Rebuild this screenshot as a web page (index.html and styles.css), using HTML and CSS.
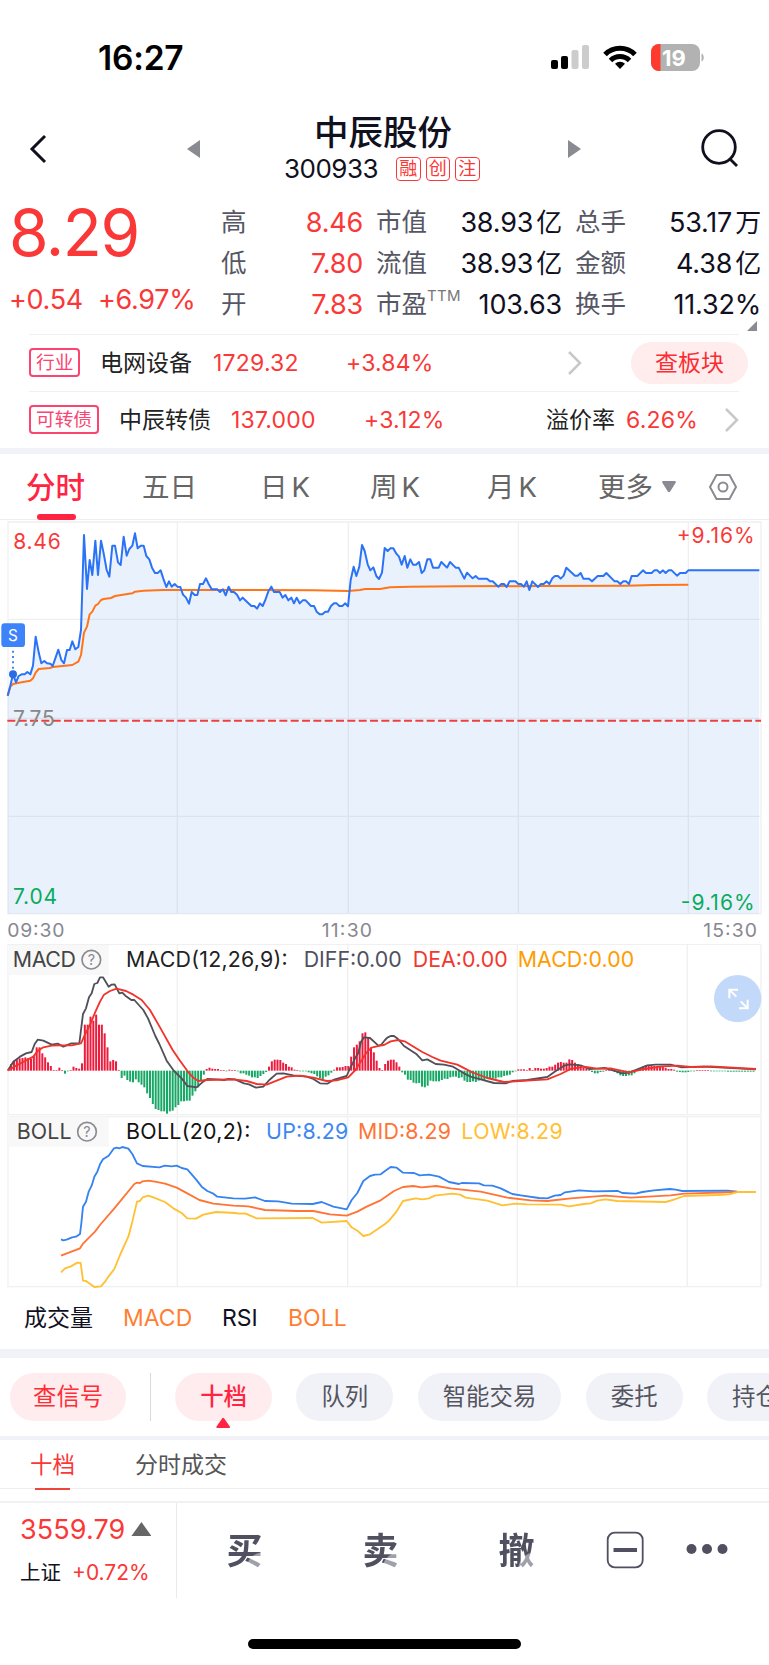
FILE: index.html
```html
<!DOCTYPE html>
<html lang="zh-CN">

<head>
    <meta charset="UTF-8">
    <meta name="viewport" content="width=device-width, initial-scale=1.0">
    <title>中辰股份 300933</title>
    <link rel="stylesheet" href="styles.css">
</head>

<body>
    <div class="statusbar">
        <span class="clock">16:27</span>
        <svg class="status-icons" width="156" height="30" viewBox="0 0 156 30">
            <rect x="1" y="17" width="7" height="9" rx="2" />
            <rect x="11" y="13" width="7" height="13" rx="2" />
            <rect x="21.500" y="7" width="7" height="19" rx="2" fill="#ccc" />
            <rect x="32" y="2" width="7" height="24" rx="2" fill="#ccc" />
            <g fill="none" stroke="#000" stroke-width="5">
                <path d="M55 11.500a21 21 0 0 1 30 0" />
                <path d="M60.500 17.500a13.500 13.500 0 0 1 19 0" />
            </g>
            <path d="M70 26l-5-5.300a7.300 7.300 0 0 1 10 0z" />
            <clipPath id="battery">
                <rect x="101" y="1" width="49" height="27" rx="8" />
            </clipPath>
            <g clip-path="url(#battery)">
                <rect x="101" y="1" width="49" height="27" fill="#b2b2b2" />
                <rect x="101" y="1" width="9.500" height="27" fill="#ff3b30" />
            </g>
            <path d="M151.500 10.500c3 1 3 7 0 8z" fill="#b2b2b2" />
            <text x="124" y="22.500" class="battery-level">19</text>
        </svg>
    </div>

    <header class="header">
        <svg class="back" width="20" height="30" viewBox="0 0 20 30">
            <path d="M17 2L4 15l13 13" />
        </svg>
        <i class="arrow arrow-left"></i>
        <div class="stock">
            <h1>中辰股份</h1>
            <div class="stock-code">
                <span>300933</span>
                <b>融</b><b>创</b><b>注</b>
            </div>
        </div>
        <i class="arrow arrow-right"></i>
        <svg class="search" width="42" height="42" viewBox="0 0 42 42">
            <circle cx="20" cy="19" r="16.300" />
            <path d="M31 31l7 7" />
        </svg>
    </header>

    <section class="quote">
        <div class="price">
            <strong>8.29</strong>
            <p><span>+0.54</span><span>+6.97%</span></p>
        </div>
        <dl class="stats">
            <dt>高</dt><dd class="up">8.46</dd>
            <dt>市值</dt><dd>38.93<i>亿</i></dd>
            <dt>总手</dt><dd>53.17<i>万</i></dd>
            <dt>低</dt><dd class="up">7.80</dd>
            <dt>流值</dt><dd>38.93<i>亿</i></dd>
            <dt>金额</dt><dd>4.38<i>亿</i></dd>
            <dt>开</dt><dd class="up">7.83</dd>
            <dt>市盈<sup>TTM</sup></dt><dd>103.63</dd>
            <dt>换手</dt><dd>11.32%</dd>
        </dl>
        <i class="corner"></i>
    </section>

    <section class="related">
        <div class="related-row industry">
            <span class="tag">行业</span>
            <span class="name">电网设备</span>
            <span class="up">1729.32</span>
            <span class="up">+3.84%</span>
            <svg class="chevron" width="16" height="26" viewBox="0 0 16 26">
                <path d="M2 2l11 11L2 24" />
            </svg>
            <button class="sector">查板块</button>
        </div>
        <div class="related-row bond">
            <span class="tag">可转债</span>
            <span class="name">中辰转债</span>
            <span class="up">137.000</span>
            <span class="up">+3.12%</span>
            <span class="name">溢价率</span>
            <span class="up">6.26%</span>
            <svg class="chevron" width="16" height="26" viewBox="0 0 16 26">
                <path d="M2 2l11 11L2 24" />
            </svg>
        </div>
    </section>

    <nav class="tabs">
        <a class="active">分时</a>
        <a>五日</a>
        <a class="kline">日K</a>
        <a class="kline">周K</a>
        <a class="kline">月K</a>
        <a>更多<i></i></a>
        <svg width="30" height="28" viewBox="0 0 30 28">
            <path d="M8.500 2h13L28 14l-6.500 12h-13L2 14z" />
            <circle cx="15" cy="14" r="4.500" />
        </svg>
    </nav>

    <!-- all charts are drawn at 3 units per pixel -->
    <svg class="chart" width="769" height="424" viewBox="0 0 2307 1272">
        <path class="grid" d="M24 6H2283V1181H24zM532 6V1181M1045 6V1181M1555 6V1181M2065 6V1181M24 298H2283M24 595H2283M24 889H2283" />
        <path class="area" id="price-area" />
        <polyline class="line average" id="average" />
        <polyline class="line price-line" id="price" />
        <path class="prev-close" d="M22 602H2283" />
        <path class="sell-pin" d="M39 392V455" />
        <circle cx="39" cy="463" r="12" fill="#2c6be0" />
        <rect x="4" y="310" width="71" height="71" rx="10" fill="#3d83fa" />
        <text class="sell" x="39" y="362">S</text>
        <g class="scale">
            <text x="40" y="87" textLength="142" fill="#fa3838">8.46</text>
            <text x="39" y="619" textLength="125" fill="#888">7.75</text>
            <text x="39" y="1153" textLength="132" fill="#09ab5c">7.04</text>
            <text x="2030" y="69" textLength="234" fill="#fa3838">+9.16%</text>
            <text x="2042" y="1170" textLength="222" fill="#09ab5c">-9.16%</text>
        </g>
        <g class="times">
            <text x="22" y="1251" textLength="171">09:30</text>
            <text x="965" y="1251" textLength="151">11:30</text>
            <text x="2110" y="1251" textLength="161">15:30</text>
        </g>
    </svg>

    <svg class="chart" width="769" height="172" viewBox="0 162 2307 516">
        <path class="grid" d="M24 163H2283V674H24zM532 163V674M1043 163V674M1552 163V674M2062 163V674" />
        <rect x="24" y="165" width="302" height="90" fill="#f8f8f8" />
        <g id="bars"></g>
        <polyline class="line diff" id="diff" />
        <polyline class="line dea" id="dea" />
        <g class="legend">
            <text x="38" y="232" textLength="190" fill="#444">MACD</text>
            <text x="378" y="232" textLength="485" fill="#222">MACD(12,26,9):</text>
            <text x="911" y="232" textLength="294" fill="#50505e">DIFF:0.00</text>
            <text x="1238" y="232" textLength="285" fill="#f2382e">DEA:0.00</text>
            <text x="1553" y="232" textLength="350" fill="#ff9c00">MACD:0.00</text>
        </g>
        <circle class="help" cx="274" cy="209" r="28" />
        <text class="help-mark" x="274" y="225">?</text>
        <circle cx="2213" cy="326" r="71" fill="#c3d9f9" />
        <path class="expand" d="M2188 325V299H2214M2190 301L2209 320M2217 355H2243V329M2241 353L2222 334" />
    </svg>

    <svg class="chart" width="769" height="172" viewBox="0 18 2307 516">
        <path class="grid" d="M24 20H2283V530H24zM532 20V530M1043 20V530M1552 20V530M2062 20V530" />
        <rect x="24" y="20" width="302" height="90" fill="#f8f8f8" />
        <polyline class="line upper" id="upper" />
        <polyline class="line middle" id="middle" />
        <polyline class="line lower" id="lower" />
        <g class="legend">
            <text x="50" y="87" textLength="165" fill="#444">BOLL</text>
            <text x="378" y="87" textLength="373" fill="#111">BOLL(20,2):</text>
            <text x="798" y="87" textLength="247" fill="#3c87f0">UP:8.29</text>
            <text x="1074" y="87" textLength="279" fill="#ff7434">MID:8.29</text>
            <text x="1384" y="87" textLength="304" fill="#ffc032">LOW:8.29</text>
        </g>
        <circle class="help" cx="261" cy="65" r="28" />
        <text class="help-mark" x="261" y="81">?</text>
    </svg>

    <div class="indicators">
        <a>成交量</a>
        <a class="on">MACD</a>
        <a>RSI</a>
        <a class="on">BOLL</a>
    </div>

    <div class="chips">
        <button class="chip signal">查信号</button>
        <i class="divider"></i>
        <button class="chip active">十档</button>
        <button class="chip">队列</button>
        <button class="chip">智能交易</button>
        <button class="chip">委托</button>
        <button class="chip">持仓</button>
    </div>

    <div class="subtabs">
        <a class="active">十档</a>
        <a>分时成交</a>
    </div>

    <footer class="trade">
        <div class="index">
            <p class="index-value">3559.79<i></i></p>
            <p class="index-change">上证<span>+0.72%</span></p>
        </div>
        <button class="deal">买</button>
        <button class="deal">卖</button>
        <button class="deal">撤</button>
        <svg class="more" width="123" height="40" viewBox="0 0 123 40">
            <rect x="1.700" y="2.700" width="35" height="34.600" rx="7" fill="none" stroke="#505060" stroke-width="1.800" />
            <path d="M7.500 20h23.500" stroke="#505060" stroke-width="4" />
            <g fill="#505060">
                <circle cx="85.500" cy="19" r="5" />
                <circle cx="101" cy="19" r="5" />
                <circle cx="116.500" cy="19" r="5" />
            </g>
        </svg>
    </footer>
    <div class="home-indicator"></div>

    <script src="charts.js"></script>
</body>

</html>
```
FILE: styles.css
```css
* {
    box-sizing: border-box;
}

body {
    margin: 0;
    width: 769px;
    height: 1665px;
    overflow: hidden;
    background: #fff;
    color: #10101e;
    font-family: Inter, "Noto Sans CJK SC", sans-serif;
    font-size: 23px;
    line-height: 1;
    white-space: nowrap;
}

h1,
p,
dl,
dd {
    margin: 0;
}

i {
    font-style: normal;
}

svg {
    display: block;
}

button {
    border: 0;
    padding: 0;
    font: inherit;
    line-height: 1;
}

.up {
    color: #fa3838;
}

/* status bar */

.statusbar {
    display: flex;
    justify-content: space-between;
    align-items: center;
    height: 116px;
    padding: 0 64px 0 98px;
}

.clock {
    color: #000;
    font-size: 33.500px;
    font-weight: 600;
    line-height: 40px;
    padding-bottom: 1px;
    letter-spacing: -0.2px;
}

.battery-level {
    font-size: 22px;
    font-weight: 700;
    fill: #fff;
    text-anchor: middle;
}

.status-icons {
    margin-right: -1px;
}

/* header */

.header {
    display: flex;
    align-items: center;
    height: 66px;
    padding: 0 28px;
}

.back {
    margin-top: -1px;
    fill: none;
    stroke: #10101e;
    stroke-width: 3;
}

.arrow {
    width: 13px;
    height: 18px;
    background: #8a8a92;
}

.arrow-left {
    margin-left: 139px;
    clip-path: polygon(100% 0, 100% 100%, 0 50%);
}

.arrow-right {
    clip-path: polygon(0 0, 100% 50%, 0 100%);
}

.stock {
    width: 368px;
    padding-left: 84px;
}

.stock h1 {
    padding-left: 30px;
    font-size: 34.500px;
    font-weight: 500;
    line-height: 33px;
    padding-bottom: 5px;
}

.stock-code {
    display: flex;
    align-items: center;
    gap: 5px;
    height: 28px;
    padding-top: 1px;
    font-size: 26px;

    >span {
        width: 107px;
        letter-spacing: -0.5px;
    }

    >b {
        width: 24.500px;
        height: 24px;
        border: 1.500px solid #fa3838;
        border-radius: 4px;
        color: #fa3838;
        font-size: 18px;
        font-weight: 400;
        line-height: 22px;
        text-align: center;
    }
}

.search {
    margin-left: 118px;
    fill: none;
    stroke: #10101e;
    stroke-width: 2.800;
}

/* quote */

.quote {
    position: relative;
    display: flex;
    height: 152px;
    padding: 20px 8px 0 9px;
}

.price {
    width: 212px;
    color: #fa3838;

    strong {
        display: block;
        font-size: 64px;
        font-weight: 400;
        line-height: 61px;
        letter-spacing: -1.400px;
    }

    p {
        display: flex;
        gap: 15px;
        margin-top: 23px;
        font-size: 27px;
        line-height: 28px;
        letter-spacing: -0.3px;
    }
}

.stats {
    display: grid;
    grid-template-columns: 56px 86px 64px 135px 64px 135px;
    grid-auto-rows: 41px;
    width: 540px;
    font-size: 27px;
    line-height: 41px;

    dt {
        color: #565664;
        font-size: 25.500px;
        line-height: 40px;
    }

    dt:nth-of-type(3n + 2),
    dt:nth-of-type(3n) {
        padding-left: 13px;
    }

    dd {
        text-align: right;
        letter-spacing: -0.2px;
    }

    dd i {
        padding-left: 3px;
        font-size: 26px;
    }

    sup {
        display: inline-block;
        height: 10px;
        font-size: 15px;
        line-height: 1;
        vertical-align: 12px;
        color: #777;
        letter-spacing: 0.3px;
    }
}

.corner {
    position: absolute;
    right: 12px;
    bottom: 3px;
    width: 10px;
    height: 10px;
    background: #8a8a92;
    clip-path: polygon(100% 0, 100% 100%, 0 100%);
}

/* related securities */

.related {
    height: 120px;
    border-bottom: 6px solid #f1f2f8;
}

.related-row {
    display: grid;
    align-items: center;
    height: 57px;
    margin: 0 30px 0 29px;
    border-top: 1px solid #f1f1f3;
    letter-spacing: 0.2px;
}

.industry {
    grid-template-columns: 71px 113px 133px 221px 64px 117px;
}

.bond {
    grid-template-columns: 90px 112px 133px 182px 80px 98px 16px;
}

.tag {
    justify-self: start;
    height: 29px;
    padding: 0 5px;
    border: 2px solid #fb4470;
    border-radius: 4px;
    color: #fb4470;
    font-size: 18.700px;
    line-height: 25px;
    letter-spacing: 0;
    margin-top: -2px;
}

.name {
    color: #222;
    letter-spacing: 0;
}

.chevron {
    fill: none;
    stroke: #c8c8c8;
    stroke-width: 2.500;
}

.sector {
    height: 42px;
    border-radius: 21px;
    background: #ffecec;
    color: #fa2c34;
}

/* period tabs */

.tabs {
    display: grid;
    grid-template-columns: 116px 121px 110px 117px 108px 110px 30px;
    align-items: center;
    height: 66px;
    padding-left: 26px;
    border-bottom: 1px solid #eee;
    color: #666;
    font-size: 27.500px;

    a {
        height: 66px;
        line-height: 67px;
    }

    .kline {
        margin-left: -3px;
        letter-spacing: 4px;
    }

    .active {
        position: relative;
        color: #ff2442;
        font-size: 29.500px;
        font-weight: 500;
    }

    .active::after {
        content: "";
        position: absolute;
        left: 11px;
        bottom: 0;
        width: 39px;
        height: 6px;
        border-radius: 3px;
        background: #ff2442;
    }

    i {
        display: inline-block;
        width: 14px;
        height: 11px;
        margin-left: 9px;
        background: #8a8a92;
        vertical-align: 5px;
        clip-path: polygon(6% 0, 94% 0, 100% 12%, 56% 100%, 44% 100%, 0 12%);
    }

    svg {
        fill: none;
        stroke: #8a8a92;
        stroke-width: 2;
    }
}

/* charts */

.grid {
    fill: none;
    stroke: #f0f0f0;
    stroke-width: 4;
}

.area {
    fill: #2674f0;
    fill-opacity: 0.1;
}

.line {
    fill: none;
    stroke-width: 5.500;
    stroke-linejoin: round;
}

.price-line { stroke: #2b73f6; stroke-width: 6; }
.average { stroke: #ff7518; stroke-width: 6; }
.diff { stroke: #50505a; }
.dea { stroke: #f2332b; }
.upper { stroke: #3583f0; }
.middle { stroke: #ff7434; }
.lower { stroke: #ffc032; }

.prev-close {
    stroke: #ef3e3e;
    stroke-width: 6;
    stroke-dasharray: 24 10;
}

.sell-pin {
    stroke: #4a86f0;
    stroke-width: 6;
    stroke-dasharray: 6 10;
}

.sell {
    fill: #fff;
    font-size: 46px;
    text-anchor: middle;
}

.scale {
    font-size: 63px;
}

.times {
    fill: #888890;
    font-size: 58px;
}

.legend {
    font-size: 64px;
}

.help {
    fill: none;
    stroke: #8a8a92;
    stroke-width: 5;
}

.help-mark {
    fill: #8a8a92;
    font-size: 43px;
    text-anchor: middle;
}

.expand {
    fill: none;
    stroke: #fff;
    stroke-width: 6;
}

.rise { fill: #ee1c3c; }
.fall { fill: #18a866; }

.indicators {
    display: flex;
    align-items: center;
    height: 61px;
    padding-left: 24px;

    a {
        width: 99px;
    }

    a:nth-child(3) {
        width: 66px;
    }

    .on {
        color: #ff7f32;
    }
}

/* order book */

.chips {
    display: flex;
    gap: 24.500px;
    align-items: flex-start;
    height: 91px;
    padding: 15px 0 0 10px;
    border-top: 9px solid #f1f2f8;
    border-bottom: 4px solid #f1f2f8;
    overflow: hidden;
}

.chip {
    position: relative;
    flex: none;
    height: 48px;
    padding: 0 25px;
    border-radius: 24px;
    background: #f1f2f8;
    color: #555560;
    font-size: 23.400px;

    &.signal {
        padding: 0 23px;
        background: #ffecee;
        color: #ff2d35;
        margin-right: -1px;
    }

    &.active {
        background: #ffecee;
        color: #ff2442;
        font-weight: 500;
    }

    &.active::after {
        content: "";
        position: absolute;
        left: 41px;
        bottom: -7px;
        width: 14px;
        height: 10px;
        background: #ff2442;
        clip-path: polygon(45% 0, 55% 0, 100% 90%, 95% 100%, 5% 100%, 0 90%);
    }
}

.divider {
    flex: none;
    width: 1px;
    height: 48px;
    background: #d8d8de;
}

.subtabs {
    display: flex;
    gap: 60px;
    height: 63px;
    padding-left: 30px;
    border-bottom: 2px solid #f1f1f4;
    line-height: 50px;
    color: #555;
    background: linear-gradient(#eee, #eee) 0 48px / 100% 1px no-repeat;

    .active {
        height: 50px;
        color: #fa3838;
        font-size: 22.500px;
        background: linear-gradient(#f04438, #f04438) 50% 100% / 35px 2px no-repeat;
    }
}

/* trade bar */

.trade {
    display: flex;
    height: 95px;
}

.index {
    flex: none;
    width: 177px;
    padding: 13px 0 0 20px;
    border-right: 1px solid #eaeaee;
}

.index-value {
    color: #fa3838;
    font-size: 27px;
    letter-spacing: 0.1px;

    i {
        display: inline-block;
        width: 20px;
        height: 14px;
        margin-left: 6px;
        background: #666;
        vertical-align: 3px;
        clip-path: polygon(50% 0, 100% 100%, 0 100%);
    }
}

.index-change {
    margin-top: 19px;
    font-size: 20.500px;

    span {
        margin-left: 11px;
        color: #fa3838;
        font-size: 21px;
    }
}

.deal {
    flex: none;
    width: 136px;
    padding-right: 1px;
    /* the last stroke of each glyph fades out */
    background: radial-gradient(circle at 86px 66px, #a0a0aa 16px, #505060 17px);
    background-clip: text;
    color: transparent;
    font-size: 36px;
    font-weight: 700;
}

.more {
    flex: none;
    margin: 27px 0 0 21px;
}

.home-indicator {
    width: 273px;
    height: 10px;
    margin: 41px auto 0;
    border-radius: 5px;
    background: #000;
}
```
FILE: charts.js
```js
const price = `23,527 31,497 39,463 48,487 56,468 65,463 74,463 82,456 91,463 99,437 107,350 116,397 124,430 133,423
141,430 151,431 158,438 167,412 175,389 184,420 192,430 201,390 209,390 217,364 226,388 235,381 243,330 252,45 261,207
269,120 277,165 286,62 294,165 303,62 311,100 320,150 328,170 337,77 345,77 354,127 362,135 371,50 380,107 388,87 397,77
405,40 413,85 422,77 431,77 439,108 448,118 456,143 465,159 473,159 482,151 490,176 499,201 507,184 515,200 524,192
532,200 541,201 549,224 558,233 567,251 575,216 584,225 592,225 600,192 609,192 618,175 626,192 635,208 652,208 660,216
669,208 677,226 686,200 694,216 702,216 711,224 720,241 728,233 754,258 763,258 771,266 780,250 788,258 796,240 805,214
814,200 822,216 839,216 848,233 856,225 865,241 874,233 882,250 890,233 899,250 908,241 917,241 933,258 942,258 950,275
959,283 967,283 976,275 984,275 993,258 1002,250 1010,250 1018,258 1027,258 1036,250 1044,259 1052,180 1061,140
1069,168 1078,140 1086,75 1094,93 1103,133 1111,151 1120,142 1129,168 1137,177 1146,158 1154,84 1163,93 1171,85 1180,85
1189,101 1197,110 1205,134 1214,108 1222,143 1231,118 1239,134 1248,134 1257,126 1265,159 1273,151 1282,118 1291,118
1299,143 1316,143 1324,126 1341,143 1350,126 1367,143 1376,143 1393,176 1401,158 1418,175 1427,168 1435,176 1461,176
1470,184 1478,184 1495,200 1504,192 1512,192 1520,201 1529,184 1546,184 1555,192 1563,192 1572,200 1580,184 1588,210
1597,184 1614,201 1623,192 1631,192 1640,184 1648,192 1657,175 1665,168 1674,168 1682,176 1691,167 1699,143 1725,167
1733,167 1742,159 1750,176 1767,176 1776,184 1793,168 1810,168 1819,159 1844,184 1852,184 1861,192 1870,184 1878,184
1887,192 1895,168 1912,168 1929,151 1938,159 1955,159 1963,151 1972,151 1980,159 1989,151 1997,159 2006,151 2015,151
2031,167 2040,159 2057,159 2065,151 2278,151`;

const average = `23,527 31,500 39,492 65,487 91,482 99,475 107,458 116,447 150,444 158,441 217,435 235,425 243,405
252,338 261,320 269,283 277,275 286,257 294,252 303,240 311,237 333,234 345,228 397,220 405,215 430,212 490,210 780,210
940,211 1044,213 1080,210 1095,207 1140,207 1170,202 1230,200 1376,199 1620,198 1880,197 1960,195 2065,194`;

const diff = `24,541 40,515 60,500 78,490 95,486 104,462 113,449 130,452 155,464 173,461 190,470 214,460 238,460 243,420
249,372 258,355 267,322 275,310 283,282 292,279 300,262 309,262 326,290 334,284 344,283 358,310 367,308 376,317 394,330
403,330 430,360 444,385 466,438 478,462 500,512 522,543 545,565 562,588 590,592 607,577 622,567 650,568 672,570 685,567
705,568 732,580 747,583 768,593 790,590 808,570 830,551 850,550 880,556 920,560 940,567 960,580 982,581 1000,570
1040,558 1050,535 1058,520 1066,503 1075,489 1083,455 1092,442 1110,444 1135,467 1143,465 1155,450 1162,443 1172,438
1182,438 1194,447 1212,468 1227,478 1250,493 1267,511 1282,508 1307,522 1332,524 1359,530 1392,550 1412,560 1442,568
1482,579 1517,580 1537,573 1582,570 1642,561 1664,545 1692,527 1710,523 1742,526 1767,537 1792,536 1814,534 1842,542
1867,550 1887,548 1912,538 1942,526 1967,524 2012,524 2045,532 2112,530 2268,538`;

const dea = `24,541 50,526 100,500 112,484 130,472 155,467 180,466 215,466 243,460 252,440 272,400 285,368 300,335
312,314 330,303 350,296 378,303 400,314 425,330 450,360 480,412 518,480 540,512 565,547 580,563 595,573 620,570 700,568
740,573 770,582 800,584 830,572 860,560 900,557 940,563 980,573 1010,571 1045,562 1066,540 1082,515 1100,487 1115,473
1140,467 1152,465 1172,454 1194,450 1214,454 1242,471 1267,486 1297,501 1322,512 1372,524 1417,547 1462,564 1512,576
1582,572 1642,568 1682,552 1712,537 1752,530 1792,536 1832,535 1887,547 1932,537 1982,530 2032,527 2072,531 2132,529
2268,537`;

// one value per minute, positive is red
const macd = [4, 20, 30, 34, 37, 38, 40, 38, 36, 45, 70, 70, 52, 40, 25, 14, 2, 2, 9, 1, -9, -2, 1, 12, 8, 6, 22, 138,
    138, 162, 150, 168, 138, 138, 112, 70, 28, 32, 28, 1, -22, -15, -28, -33, -35, -26, -35, -42, -50, -68, -82, -100,
    -115, -118, -122, -122, -129, -122, -120, -110, -103, -92, -92, -90, -90, -75, -62, -50, -28, -12, 5, 9, 6, 5, 5, 2,
    2, -2, 3, 1, 1, -2, -8, -8, -12, -15, -20, -20, -22, -16, -10, -4, 12, 28, 33, 33, 32, 24, 20, 12, 10, 3, 2, -1,
    -1, -1, -5, -8, -10, -17, -23, -26, -18, -14, -6, 3, 10, 10, 11, 14, 14, 42, 70, 78, 88, 112, 115, 98, 70, 55, 30,
    8, 1, 20, 30, 33, 33, 25, 12, -5, -12, -27, -28, -36, -38, -37, -48, -50, -45, -30, -32, -32, -32, -28, -24, -25,
    -20, -18, -18, -22, -20, -30, -34, -34, -32, -34, -30, -28, -28, -24, -22, -24, -24, -20, -20, -16, -14, -12, -5,
    0, 4, 4, 4, 2, 8, 1, 8, 8, 6, 6, 8, 12, 12, 18, 24, 26, 24, 24, 34, 32, 24, 20, 14, 8, 6, 1, -4, -8, -8, -4, -3, 2,
    2, 1, -4, -8, -14, -16, -16, -14, -14, -8, 1, 4, 12, 16, 16, 15, 14, 14, 14, 12, 8, 5, 5, 3, -3, -4, -5, -5, -4,
    -1, -1, 1, 1, 1, 1, 1, -1, -1, -2, -2, -2, -2, -3, -3, -3, -3, -3, -3, -3, -3, -3, -3];

const upper = `183,388 190,391 200,389 216,382 228,380 240,372 244,340 249,290 258,275 266,245 275,227 283,200 292,185
300,163 309,148 326,137 342,115 350,113 358,115 367,111 385,116 397,132 411,160 428,168 478,172 495,167 515,169 530,167
545,174 562,178 575,193 588,208 605,230 622,243 640,251 652,260 700,265 735,266 765,262 795,273 835,274 875,281 938,282
965,276 1000,290 1040,298 1055,270 1072,249 1090,213 1110,198 1125,194 1142,193 1155,183 1172,171 1190,173 1209,188
1242,189 1259,196 1287,194 1317,200 1347,216 1377,222 1385,219 1437,220 1452,226 1477,227 1502,235 1537,252 1562,256
1617,264 1642,265 1664,257 1682,255 1695,247 1737,241 1782,244 1854,243 1867,249 1907,251 1927,246 1962,241 2009,237
2027,239 2047,243 2182,242 2212,245`;

const middle = `183,437 240,415 250,400 285,365 300,345 343,295 403,222 411,218 420,219 428,214 445,212 465,215 495,221
530,233 562,250 598,270 640,281 700,287 745,289 795,300 890,303 940,303 990,313 1040,317 1072,305 1100,290 1140,272
1155,262 1182,243 1209,231 1240,228 1265,232 1309,228 1352,235 1442,245 1522,263 1592,271 1642,273 1712,265 1817,257
1892,263 2012,256 2052,251 2212,246`;

const lower = `183,487 195,475 213,469 232,458 242,459 249,512 258,513 283,531 303,529 315,515 326,499 343,477 360,435
385,380 397,335 411,275 420,273 428,262 445,257 460,262 495,276 520,295 545,309 562,325 588,326 610,314 648,306 705,309
718,311 735,310 770,325 938,324 965,338 1040,333 1055,352 1072,362 1090,378 1110,373 1155,342 1167,332 1187,308
1209,273 1247,265 1267,268 1287,265 1304,257 1357,251 1380,254 1397,263 1462,272 1507,286 1547,281 1582,283 1682,284
1707,289 1752,282 1772,280 1792,272 1817,268 1852,273 1997,276 2022,269 2052,258 2152,255 2187,253 2212,246 2268,246`;

const lines = { price, average, diff, dea, upper, middle, lower };

for (const id in lines) {
    document.getElementById(id).setAttribute('points', lines[id]);
}

document.getElementById('price-area').setAttribute('d', `M${price} V1181 H23 Z`);

const ZERO = 542;
const STEP = 8.5;

document.getElementById('bars').innerHTML = macd.map((value, i) => {
    const height = Math.max(Math.abs(value), 2);
    const x = 22 + i * STEP;
    const y = value > 0 ? ZERO - height : ZERO;
    return `<rect class="${value > 0 ? 'rise' : 'fall'}" x="${x}" y="${y}" width="6" height="${height}" />`;
}).join('');
```
